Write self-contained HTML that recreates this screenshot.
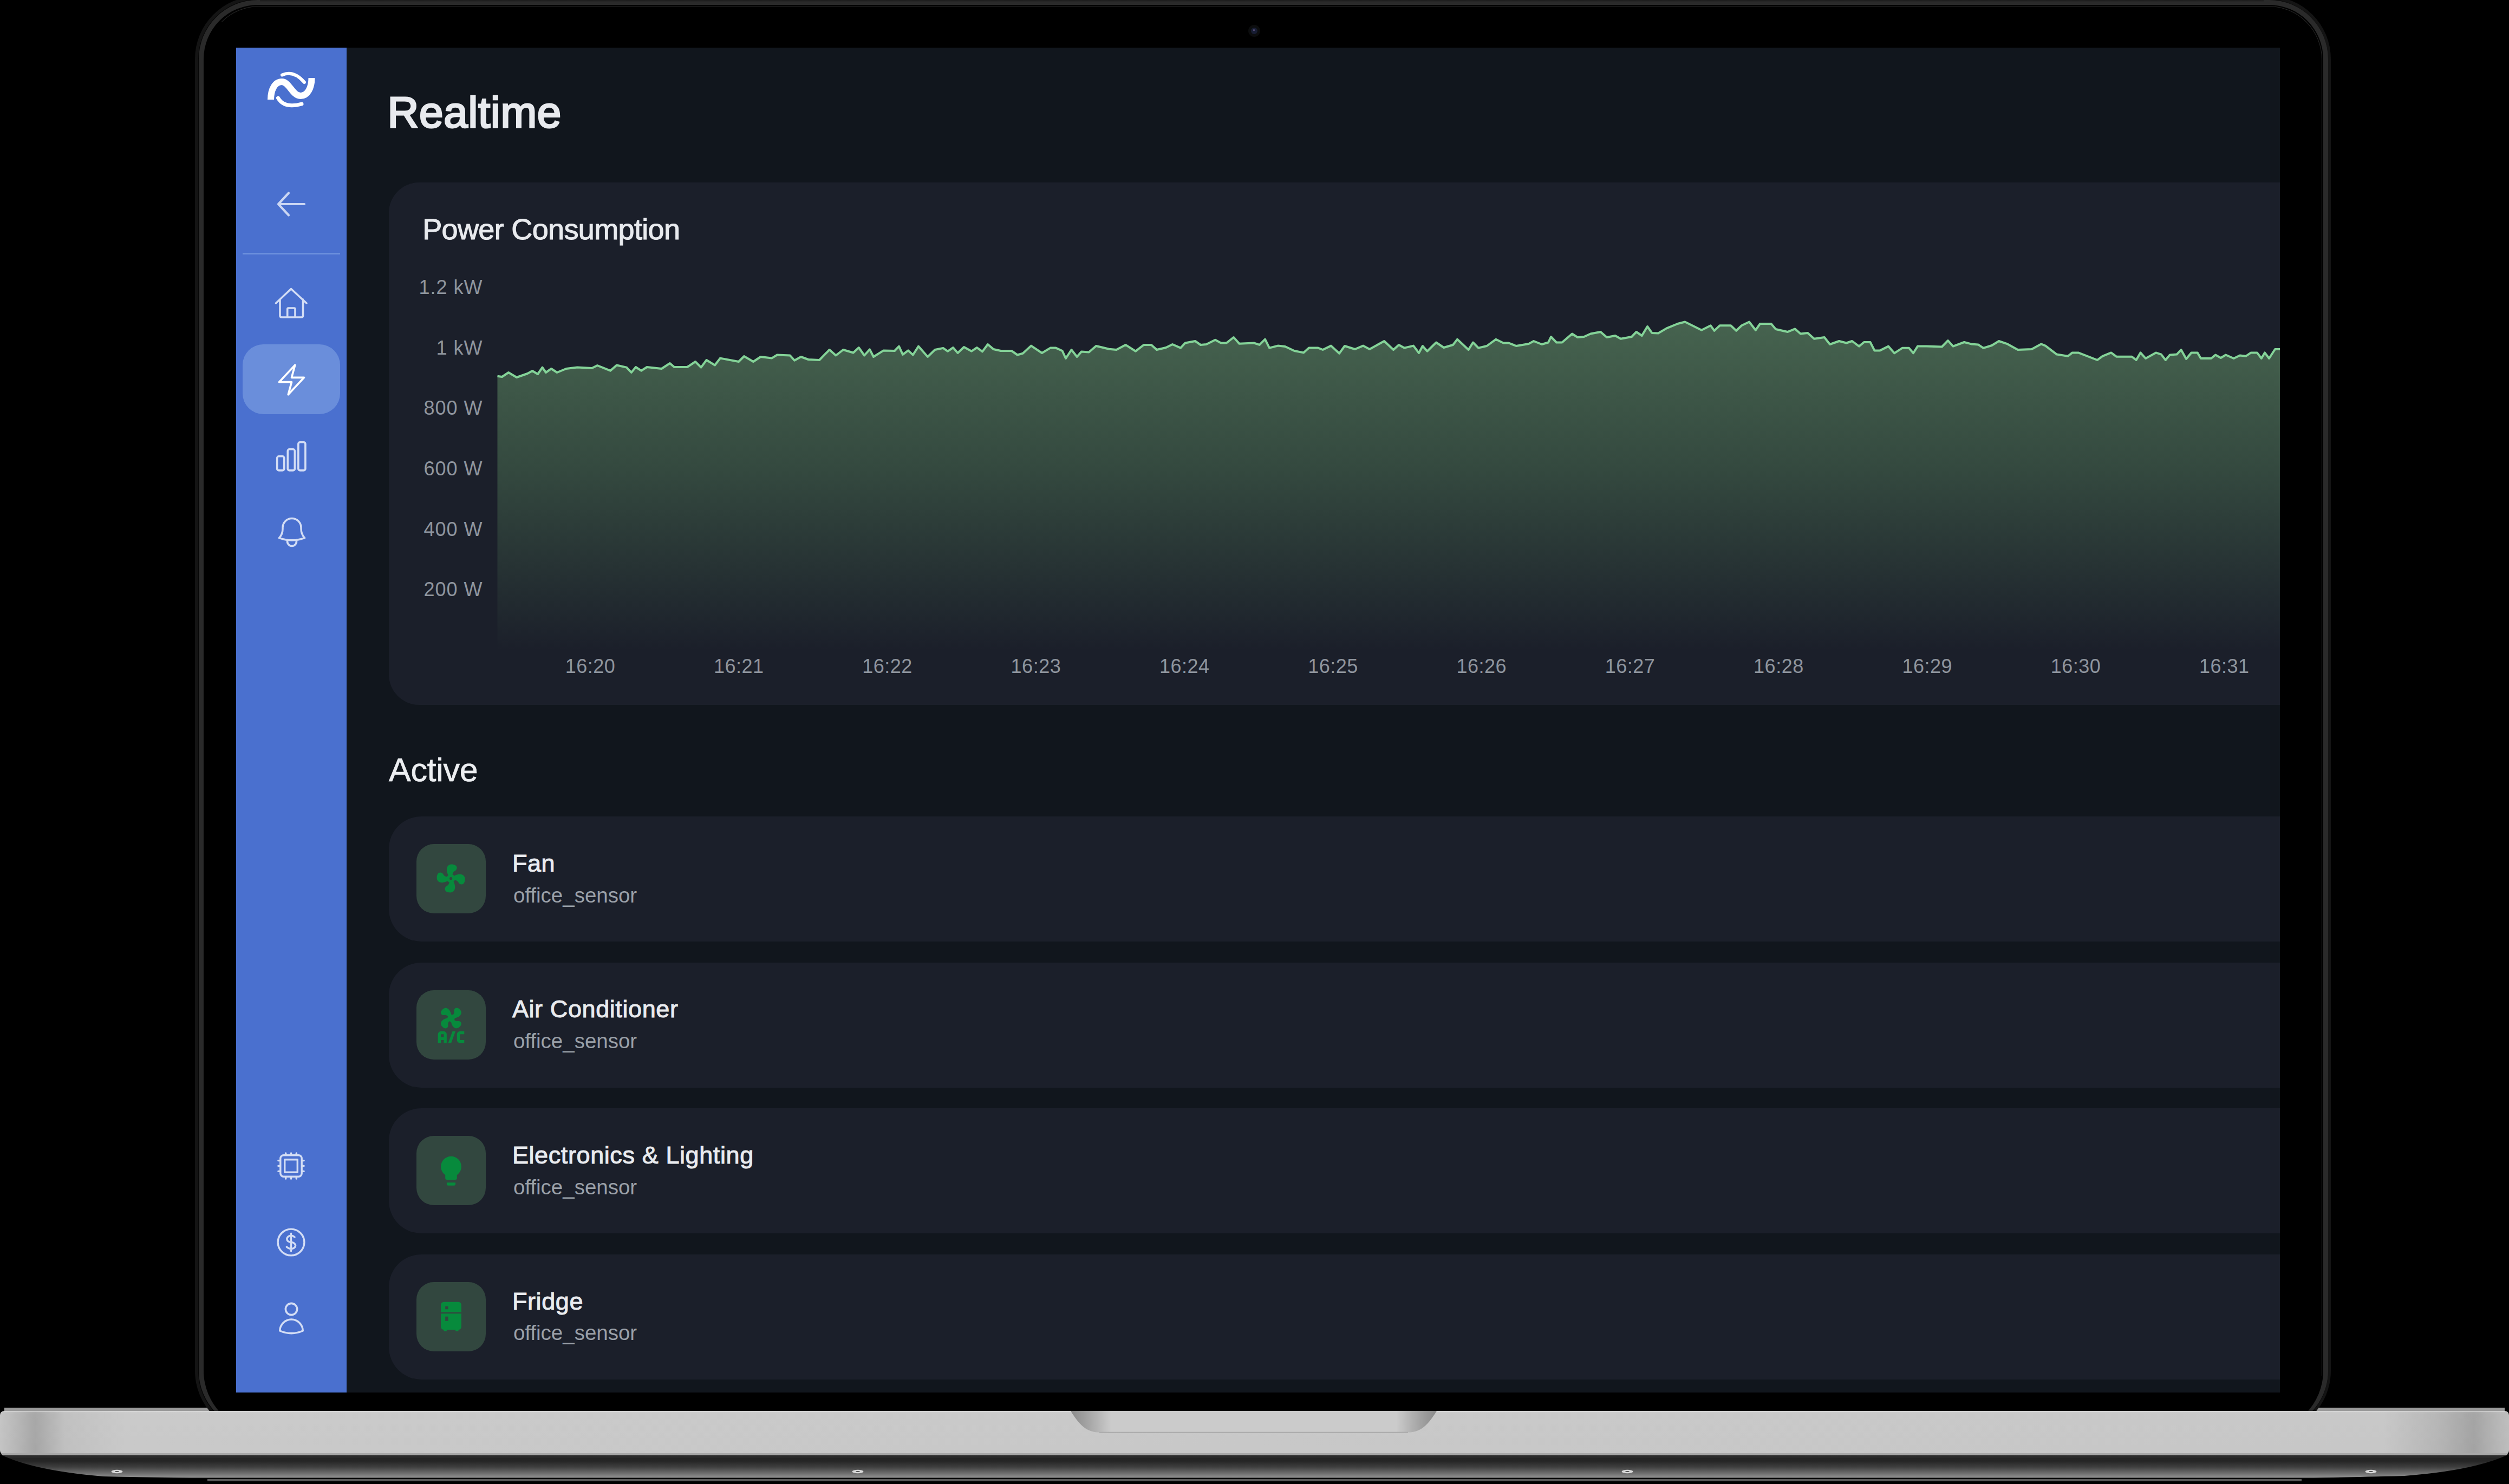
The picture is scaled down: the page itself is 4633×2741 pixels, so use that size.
<!DOCTYPE html>
<html><head><meta charset="utf-8">
<style>
html,body{margin:0;padding:0;background:#000;width:4633px;height:2741px;overflow:hidden;position:relative}
*{box-sizing:border-box}
.abs{position:absolute;display:block}
.t{position:absolute;white-space:nowrap;font-family:"Liberation Sans",sans-serif}
.card{position:absolute;background:#1b1f2a}
.ibox{position:absolute;width:128px;height:128px;border-radius:32px;background:#32473f}
#screen{position:absolute;left:436px;top:88px;width:3774px;height:2484px;background:#11161d;overflow:hidden}
#sidebar{position:absolute;left:0;top:0;width:204px;height:2484px;background:#4a70cf}
</style></head><body>
<!-- base top strip -->
<div class="abs" style="left:8px;top:2600px;width:4617px;height:7px;background:#9a9a9a"></div>
<!-- lid -->
<div class="abs" style="left:360px;top:-7px;width:3944px;height:2655px;background:#141414;border-radius:116px 116px 116px 116px"></div>
<div class="abs" style="left:366px;top:-1px;width:3933px;height:2644px;background:#060606;border-radius:110px 110px 110px 110px"></div>
<div class="abs" style="left:367px;top:0px;width:3932px;height:2642px;background:#2a2a2a;border-radius:109px 109px 110px 110px"></div>
<div class="abs" style="left:376px;top:9px;width:3914px;height:2635px;background:#000;border-radius:100px 100px 112px 112px"></div>
<div class="abs" style="left:380px;top:10.5px;width:3908px;height:2530px;border:1.5px solid #272727;border-left-color:transparent;border-bottom:0;border-radius:99px 99px 0 0"></div>
<div class="abs" style="left:480px;top:0px;width:3700px;height:3px;background:linear-gradient(#1c1c1c,#262626)"></div>
<!-- camera -->
<div class="abs" style="left:2305px;top:45.5px;width:22px;height:22px;border-radius:50%;background:#0c0d0e"></div>
<div class="abs" style="left:2310px;top:50.5px;width:12px;height:12px;border-radius:50%;background:#171d33"></div>
<div class="abs" style="left:2314px;top:53.5px;width:3px;height:3px;border-radius:50%;background:#6a5a8a"></div>
<div id="screen">
<div id="sidebar">
<svg class="abs" style="left:41.5px;top:27px" width="120" height="100" viewBox="0 0 120 100">
<path d="M22,69 C22,50 30,36 42.5,36 C56,36 62,62 77,62 C90,62 97.5,47 97.5,29" fill="none" stroke="#fff" stroke-width="12"/>
<path d="M43,23.5 Q64,14 84,37" fill="none" stroke="#fff" stroke-width="6" stroke-linecap="round"/>
<path d="M35.5,66 Q47,86 79,77" fill="none" stroke="#fff" stroke-width="7" stroke-linecap="round"/>
</svg>
<svg class="abs" style="left:64px;top:255px" width="76" height="70" viewBox="0 0 76 70">
<path d="M14,34 H62 M14,34 L33,13.5 M14,34 L33,54.5" fill="none" stroke="#cbd6f3" stroke-width="4.2" stroke-linecap="round" stroke-linejoin="round"/>
</svg>
<div class="abs" style="left:12px;top:379px;width:180px;height:3px;background:#6b8fdd"></div>
<svg class="abs" style="left:64px;top:437px" width="76" height="70" viewBox="0 0 76 70">
<path d="M9.5,35 L37.5,8.5 L66,35 M17,28 V58 Q17,61 20,61 H56.5 Q59.5,61 59.5,58 V28 M30.7,61 V46 Q30.7,44 32.7,44 H43 Q45,44 45,46 V61" fill="none" stroke="#d3ddf5" stroke-width="3.6" stroke-linecap="round" stroke-linejoin="round"/>
</svg>
<div class="abs" style="left:12px;top:548px;width:180px;height:129px;border-radius:38px;background:#6a8edb"></div>
<svg class="abs" style="left:68.5px;top:579.5px" width="67" height="67" viewBox="0 0 24 24">
<path d="M3.75 13.5l10.5-11.25L12 10.5h8.25L9.75 21.75 12 13.5H3.75z" fill="none" stroke="#fff" stroke-width="1.3" stroke-linejoin="round" stroke-linecap="round"/>
</svg>
<svg class="abs" style="left:67.2px;top:719.7px" width="69.6" height="69.6" viewBox="0 0 24 24">
<path d="M3 13.125C3 12.504 3.504 12 4.125 12h2.25c.621 0 1.125.504 1.125 1.125v6.75C7.5 20.496 6.996 21 6.375 21h-2.25A1.125 1.125 0 013 19.875v-6.75zM9.75 8.625c0-.621.504-1.125 1.125-1.125h2.25c.621 0 1.125.504 1.125 1.125v11.25c0 .621-.504 1.125-1.125 1.125h-2.25a1.125 1.125 0 01-1.125-1.125V8.625zM16.5 4.125c0-.621.504-1.125 1.125-1.125h2.25C20.496 3 21 3.504 21 4.125v15.75c0 .621-.504 1.125-1.125 1.125h-2.25a1.125 1.125 0 01-1.125-1.125V4.125z" fill="none" stroke="#d3ddf5" stroke-width="1.25"/>
</svg>
<svg class="abs" style="left:68.6px;top:861px" width="68" height="68" viewBox="0 0 24 24">
<path d="M14.857 17.082a23.848 23.848 0 005.454-1.31A8.967 8.967 0 0118 9.75v-.7V9A6 6 0 006 9v.75a8.967 8.967 0 01-2.312 6.022c1.733.64 3.56 1.085 5.455 1.31m5.714 0a24.255 24.255 0 01-5.714 0m5.714 0a3 3 0 11-5.714 0" fill="none" stroke="#d3ddf5" stroke-width="1.25" stroke-linecap="round" stroke-linejoin="round"/>
</svg>
<svg class="abs" style="left:70px;top:2034px" width="63" height="63" viewBox="0 0 24 24">
<path d="M8.25 3v1.5M4.5 8.25H3m18 0h-1.5M4.5 12H3m18 0h-1.5m-15 3.75H3m18 0h-1.5M8.25 19.5V21M12 3v1.5m0 15V21m3.75-18v1.5m0 15V21m-9-1.5h10.5a2.25 2.25 0 002.25-2.25V6.75a2.25 2.25 0 00-2.25-2.25H6.75A2.25 2.25 0 004.5 6.75v10.5a2.25 2.25 0 002.25 2.25zm.75-12h9v9h-9v-9z" fill="none" stroke="#d3ddf5" stroke-width="1.3" stroke-linecap="round" stroke-linejoin="round"/>
</svg>
<svg class="abs" style="left:69px;top:2174px" width="65" height="65" viewBox="0 0 24 24">
<path d="M12 6v12m-3-2.818l.879.659c1.171.879 3.07.879 4.242 0 1.172-.879 1.172-2.303 0-3.182C13.536 12.219 12.768 12 12 12c-.725 0-1.45-.22-2.003-.659-1.106-.879-1.106-2.303 0-3.182s2.9-.879 4.006 0l.415.33M21 12a9 9 0 11-18 0 9 9 0 0118 0z" fill="none" stroke="#d3ddf5" stroke-width="1.25" stroke-linecap="round" stroke-linejoin="round"/>
</svg>
<svg class="abs" style="left:67.5px;top:2313px" width="68" height="68" viewBox="0 0 24 24">
<path d="M15.75 6a3.75 3.75 0 11-7.5 0 3.75 3.75 0 017.5 0zM4.501 20.118a7.5 7.5 0 0114.998 0A17.933 17.933 0 0112 21.75c-2.676 0-5.216-.584-7.499-1.632z" fill="none" stroke="#d3ddf5" stroke-width="1.25" stroke-linecap="round" stroke-linejoin="round"/>
</svg>
</div>
<div class="t" style="left:279.4px;top:79.5px;font-size:80px;line-height:80px;font-weight:400;color:#e8eaee;letter-spacing:0.75px;-webkit-text-stroke:3px #e8eaee;">Realtime</div>
<div class="card" style="left:282px;top:249px;width:3582px;height:965px;border-radius:56px"></div>
<div class="t" style="left:344.2px;top:307.9px;font-size:54px;line-height:54px;font-weight:400;color:#e8eaee;letter-spacing:-0.65px;-webkit-text-stroke:1.1px #e8eaee;">Power Consumption</div>
<div class="t" style="right:3318.5px;top:425.2px;font-size:36px;line-height:36px;font-weight:400;color:#8f959e;letter-spacing:1.0px">1.2 kW</div>
<div class="t" style="right:3318.5px;top:536.8px;font-size:36px;line-height:36px;font-weight:400;color:#8f959e;letter-spacing:1.0px">1 kW</div>
<div class="t" style="right:3318.5px;top:648.4px;font-size:36px;line-height:36px;font-weight:400;color:#8f959e;letter-spacing:1.0px">800 W</div>
<div class="t" style="right:3318.5px;top:760.0px;font-size:36px;line-height:36px;font-weight:400;color:#8f959e;letter-spacing:1.0px">600 W</div>
<div class="t" style="right:3318.5px;top:871.6px;font-size:36px;line-height:36px;font-weight:400;color:#8f959e;letter-spacing:1.0px">400 W</div>
<div class="t" style="right:3318.5px;top:983.2px;font-size:36px;line-height:36px;font-weight:400;color:#8f959e;letter-spacing:1.0px">200 W</div>
<div class="t" style="left:454.0px;width:400px;text-align:center;top:1125.0px;font-size:36px;line-height:36px;font-weight:400;color:#8f959e;letter-spacing:0.5px">16:20</div>
<div class="t" style="left:728.3px;width:400px;text-align:center;top:1125.0px;font-size:36px;line-height:36px;font-weight:400;color:#8f959e;letter-spacing:0.5px">16:21</div>
<div class="t" style="left:1002.6px;width:400px;text-align:center;top:1125.0px;font-size:36px;line-height:36px;font-weight:400;color:#8f959e;letter-spacing:0.5px">16:22</div>
<div class="t" style="left:1276.9px;width:400px;text-align:center;top:1125.0px;font-size:36px;line-height:36px;font-weight:400;color:#8f959e;letter-spacing:0.5px">16:23</div>
<div class="t" style="left:1551.2px;width:400px;text-align:center;top:1125.0px;font-size:36px;line-height:36px;font-weight:400;color:#8f959e;letter-spacing:0.5px">16:24</div>
<div class="t" style="left:1825.5px;width:400px;text-align:center;top:1125.0px;font-size:36px;line-height:36px;font-weight:400;color:#8f959e;letter-spacing:0.5px">16:25</div>
<div class="t" style="left:2099.8px;width:400px;text-align:center;top:1125.0px;font-size:36px;line-height:36px;font-weight:400;color:#8f959e;letter-spacing:0.5px">16:26</div>
<div class="t" style="left:2374.1px;width:400px;text-align:center;top:1125.0px;font-size:36px;line-height:36px;font-weight:400;color:#8f959e;letter-spacing:0.5px">16:27</div>
<div class="t" style="left:2648.4px;width:400px;text-align:center;top:1125.0px;font-size:36px;line-height:36px;font-weight:400;color:#8f959e;letter-spacing:0.5px">16:28</div>
<div class="t" style="left:2922.7px;width:400px;text-align:center;top:1125.0px;font-size:36px;line-height:36px;font-weight:400;color:#8f959e;letter-spacing:0.5px">16:29</div>
<div class="t" style="left:3197.0px;width:400px;text-align:center;top:1125.0px;font-size:36px;line-height:36px;font-weight:400;color:#8f959e;letter-spacing:0.5px">16:30</div>
<div class="t" style="left:3471.3px;width:400px;text-align:center;top:1125.0px;font-size:36px;line-height:36px;font-weight:400;color:#8f959e;letter-spacing:0.5px">16:31</div>
<svg class="abs" style="left:469px;top:472px" width="3305" height="650" viewBox="0 0 3305 650"><defs><linearGradient id="ag" x1="0" y1="0" x2="0" y2="1"><stop offset="0" stop-color="#46634f"/><stop offset="0.45" stop-color="#34493f"/><stop offset="1" stop-color="#1b1f2a" stop-opacity="1"/></linearGradient></defs><path d="M13.5,134.8 L22,136 L34,128 L49,137 L69,130 L78,125 L88,131 L96.5,118.6 L103,128 L113,121 L123.6,128 L140.5,121 L161,118.6 L188,120 L198,115 L222,124.7 L233.7,114.5 L252,118.6 L260.8,128 L269,118 L279,124.7 L289.6,118 L316.6,121 L332,111 L340,118 L364,118 L379,108 L389.5,118.6 L399.6,105 L415,114.5 L425,101.6 L459,108 L469,98 L486,108 L499.6,99 L520,101.6 L530,95.5 L553.8,96.5 L562,105.7 L574,99 L587.6,104 L608,105 L626.6,86 L638.5,96.5 L652,86 L670.6,91.5 L680.8,82 L691,96.5 L701,85.4 L708,99 L726.5,87.4 L747,88 L755,79.6 L762,94.8 L772,87.4 L780.8,95.5 L791,79.6 L808,99 L821.4,86 L836.6,82.9 L845,88.8 L855,82 L863.5,92 L875,81 L889,88.7 L899,82 L909,89.4 L919,76 L929.5,85 L943,88 L963,88 L973.6,95.5 L983.7,92.8 L999,78.6 L1019,92 L1034.5,82.6 L1044.7,82.6 L1056.6,88 L1063,102 L1073.5,86 L1083.7,99 L1092,89.4 L1105.7,90.4 L1119,79 L1143,84.7 L1156.5,86 L1173.4,76.9 L1192,88.7 L1207,77 L1221,77 L1231,86 L1248,82 L1260,76 L1275,82.6 L1283.5,73.5 L1302,70 L1312,77 L1322.5,76 L1339,67.7 L1349.6,73.5 L1359.7,73.5 L1373,63 L1383.5,74.8 L1410.5,73.5 L1420.7,76.9 L1431,66.7 L1439,82.6 L1454.6,78.6 L1468,80 L1485,88 L1502,91.4 L1512,82.6 L1529,82.6 L1537.6,86 L1552.8,78.6 L1568,92.8 L1578,79 L1597,85 L1612,78.6 L1624,85 L1651,70 L1668,86 L1678,77 L1688,82.6 L1705,78.6 L1715,92 L1722,79 L1730.4,88.7 L1747,72.5 L1761,82 L1778,77 L1786,66.7 L1806.6,86 L1815,72.5 L1825,82.6 L1840.5,79 L1857.4,66.7 L1871,73.5 L1881,73.5 L1894.7,79 L1918,75 L1927,70 L1942,76 L1954,72.5 L1959,62 L1969,72.5 L1979.4,72.5 L1998,56.5 L2008,63 L2020,62 L2032,56.5 L2050.5,53 L2062,63 L2077.6,60 L2087.8,65.7 L2108,62 L2116.6,53 L2126.8,60 L2137,43 L2145.4,54.9 L2157,55.5 L2172.5,46.4 L2192.8,38 L2206.4,34.5 L2220,41.3 L2237,49.8 L2253.8,41.3 L2260.6,50.8 L2270.7,41.3 L2291,41.3 L2301,50.8 L2311,41.3 L2325,34.5 L2336.8,49.8 L2345,38 L2365.6,38 L2374,48 L2396,53 L2409.6,47.4 L2419.8,56.5 L2433,55 L2445,65.7 L2463.8,63 L2474,76 L2491,70 L2504.5,73.5 L2515,70 L2527.8,79.6 L2537,72 L2548.5,72 L2556.5,87.6 L2566,87.6 L2582,79.6 L2593,92.3 L2607.5,82.8 L2620,82.8 L2628,92.3 L2636,79.6 L2652,79.6 L2680.8,80.5 L2692,69 L2701.5,79.6 L2722,72 L2735,75.4 L2747.8,76.4 L2757.4,82.8 L2773,78 L2786,70 L2802,75.4 L2821,86 L2846.6,85 L2864,75.4 L2872,78.6 L2892.9,94.6 L2913.6,97.8 L2921.6,91.4 L2932.7,91.4 L2967.8,105 L2977.4,97.8 L2993.3,91.4 L3003,98.7 L3031.6,98.7 L3039.6,105 L3047.5,91.4 L3057,102 L3076,91.4 L3085.8,94.6 L3093.8,105 L3101.7,95.5 L3114.5,94.6 L3122.5,86 L3132,102.9 L3141.6,91.4 L3152.8,91.4 L3159,102 L3178,102 L3186,95.5 L3195.8,101 L3205,95.5 L3219.7,102 L3231,96.5 L3242,97.8 L3251.6,91.4 L3262.8,91.4 L3270.8,102 L3277,91.4 L3285,102 L3296,85 L3310,85 L3310,642 L13.5,642 Z" fill="url(#ag)"/><path d="M13.5,134.8 L22,136 L34,128 L49,137 L69,130 L78,125 L88,131 L96.5,118.6 L103,128 L113,121 L123.6,128 L140.5,121 L161,118.6 L188,120 L198,115 L222,124.7 L233.7,114.5 L252,118.6 L260.8,128 L269,118 L279,124.7 L289.6,118 L316.6,121 L332,111 L340,118 L364,118 L379,108 L389.5,118.6 L399.6,105 L415,114.5 L425,101.6 L459,108 L469,98 L486,108 L499.6,99 L520,101.6 L530,95.5 L553.8,96.5 L562,105.7 L574,99 L587.6,104 L608,105 L626.6,86 L638.5,96.5 L652,86 L670.6,91.5 L680.8,82 L691,96.5 L701,85.4 L708,99 L726.5,87.4 L747,88 L755,79.6 L762,94.8 L772,87.4 L780.8,95.5 L791,79.6 L808,99 L821.4,86 L836.6,82.9 L845,88.8 L855,82 L863.5,92 L875,81 L889,88.7 L899,82 L909,89.4 L919,76 L929.5,85 L943,88 L963,88 L973.6,95.5 L983.7,92.8 L999,78.6 L1019,92 L1034.5,82.6 L1044.7,82.6 L1056.6,88 L1063,102 L1073.5,86 L1083.7,99 L1092,89.4 L1105.7,90.4 L1119,79 L1143,84.7 L1156.5,86 L1173.4,76.9 L1192,88.7 L1207,77 L1221,77 L1231,86 L1248,82 L1260,76 L1275,82.6 L1283.5,73.5 L1302,70 L1312,77 L1322.5,76 L1339,67.7 L1349.6,73.5 L1359.7,73.5 L1373,63 L1383.5,74.8 L1410.5,73.5 L1420.7,76.9 L1431,66.7 L1439,82.6 L1454.6,78.6 L1468,80 L1485,88 L1502,91.4 L1512,82.6 L1529,82.6 L1537.6,86 L1552.8,78.6 L1568,92.8 L1578,79 L1597,85 L1612,78.6 L1624,85 L1651,70 L1668,86 L1678,77 L1688,82.6 L1705,78.6 L1715,92 L1722,79 L1730.4,88.7 L1747,72.5 L1761,82 L1778,77 L1786,66.7 L1806.6,86 L1815,72.5 L1825,82.6 L1840.5,79 L1857.4,66.7 L1871,73.5 L1881,73.5 L1894.7,79 L1918,75 L1927,70 L1942,76 L1954,72.5 L1959,62 L1969,72.5 L1979.4,72.5 L1998,56.5 L2008,63 L2020,62 L2032,56.5 L2050.5,53 L2062,63 L2077.6,60 L2087.8,65.7 L2108,62 L2116.6,53 L2126.8,60 L2137,43 L2145.4,54.9 L2157,55.5 L2172.5,46.4 L2192.8,38 L2206.4,34.5 L2220,41.3 L2237,49.8 L2253.8,41.3 L2260.6,50.8 L2270.7,41.3 L2291,41.3 L2301,50.8 L2311,41.3 L2325,34.5 L2336.8,49.8 L2345,38 L2365.6,38 L2374,48 L2396,53 L2409.6,47.4 L2419.8,56.5 L2433,55 L2445,65.7 L2463.8,63 L2474,76 L2491,70 L2504.5,73.5 L2515,70 L2527.8,79.6 L2537,72 L2548.5,72 L2556.5,87.6 L2566,87.6 L2582,79.6 L2593,92.3 L2607.5,82.8 L2620,82.8 L2628,92.3 L2636,79.6 L2652,79.6 L2680.8,80.5 L2692,69 L2701.5,79.6 L2722,72 L2735,75.4 L2747.8,76.4 L2757.4,82.8 L2773,78 L2786,70 L2802,75.4 L2821,86 L2846.6,85 L2864,75.4 L2872,78.6 L2892.9,94.6 L2913.6,97.8 L2921.6,91.4 L2932.7,91.4 L2967.8,105 L2977.4,97.8 L2993.3,91.4 L3003,98.7 L3031.6,98.7 L3039.6,105 L3047.5,91.4 L3057,102 L3076,91.4 L3085.8,94.6 L3093.8,105 L3101.7,95.5 L3114.5,94.6 L3122.5,86 L3132,102.9 L3141.6,91.4 L3152.8,91.4 L3159,102 L3178,102 L3186,95.5 L3195.8,101 L3205,95.5 L3219.7,102 L3231,96.5 L3242,97.8 L3251.6,91.4 L3262.8,91.4 L3270.8,102 L3277,91.4 L3285,102 L3296,85 L3310,85" fill="none" stroke="#84d398" stroke-width="4" stroke-linejoin="round"/></svg>
<div class="t" style="left:282.0px;top:1304.2px;font-size:61px;line-height:61px;font-weight:400;color:#eceef1;letter-spacing:-0.3px;-webkit-text-stroke:0.7px #eceef1;">Active</div>
<div class="card" style="left:282px;top:1420.0px;width:3582px;height:231px;border-radius:60px"></div>
<div class="ibox" style="left:333px;top:1471.0px"></div>
<svg class="abs" style="left:333px;top:1471.0px" width="128" height="128" viewBox="0 0 128 128"><g transform="translate(32.4,32.3) scale(2.6)"><path fill="#078a3c" d="M12,11A1,1 0 0,0 11,12A1,1 0 0,0 12,13A1,1 0 0,0 13,12A1,1 0 0,0 12,11M12.5,2C17,2 17.11,5.57 14.75,6.75C13.76,7.24 13.32,8.29 13.13,9.22C13.61,9.42 14.03,9.73 14.35,10.13C18.050,8.13 22.03,8.92 22.03,12.5C22.03,17 18.46,17.1 17.28,14.73C16.78,13.74 15.72,13.3 14.79,13.11C14.59,13.59 14.28,14 13.88,14.34C15.87,18.03 15.08,22 11.5,22C7,22 6.91,18.42 9.27,17.24C10.25,16.75 10.69,15.71 10.89,14.79C10.4,14.59 9.97,14.27 9.65,13.87C5.96,15.85 2,15.070 2,11.5C2,7 5.56,6.89 6.74,9.26C7.24,10.25 8.29,10.68 9.22,10.87C9.41,10.39 9.73,9.97 10.14,9.65C8.150,5.96 8.94,2 12.5,2Z"/></g></svg>
<div class="t" style="left:509.9px;top:1483.8px;font-size:45px;line-height:45px;font-weight:400;color:#e9ebef;letter-spacing:0.6px;-webkit-text-stroke:1px #e9ebef;">Fan</div>
<div class="t" style="left:511.9px;top:1546.6px;font-size:38.5px;line-height:38.5px;font-weight:400;color:#9aa0a8;letter-spacing:0px;">office_sensor</div>
<div class="card" style="left:282px;top:1689.6px;width:3582px;height:231px;border-radius:60px"></div>
<div class="ibox" style="left:333px;top:1740.6px"></div>
<svg class="abs" style="left:333px;top:1740.6px" width="128" height="128" viewBox="0 0 128 128"><g transform="translate(31.6,32.6) scale(2.7)"><path fill="#078a3c" d="M6.59,0.66C8.93,-1.15 11.47,1.06 12.04,4.5C12.47,4.5 12.89,4.62 13.27,4.84C13.79,4.24 14.25,3.42 14.07,2.5C13.65,0.35 16.06,-1.39 18.35,1.58C20.16,3.92 17.95,6.46 14.5,7.03C14.5,7.46 14.39,7.89 14.16,8.27C14.76,8.78 15.58,9.24 16.5,9.06C18.63,8.64 20.38,11.04 17.41,13.34C15.07,15.15 12.53,12.94 11.96,9.5C11.53,9.5 11.11,9.37 10.74,9.15C10.22,9.75 9.75,10.58 9.93,11.5C10.35,13.64 7.94,15.39 5.65,12.42C3.83,10.07 6.05,7.53 9.5,6.97C9.5,6.54 9.63,6.12 9.85,5.74C9.25,5.23 8.43,4.76 7.5,4.94C5.37,5.36 3.62,2.96 6.59,0.66M5,16H7A2,2 0 0,1 9,18V24H7V22H5V24H3V18A2,2 0 0,1 5,16M5,18V20H7V18H5M12.93,16H15L12.07,24H10L12.93,16M18,16H21V18H18V22H21V24H18A2,2 0 0,1 16,22V18A2,2 0 0,1 18,16Z"/></g></svg>
<div class="t" style="left:509.9px;top:1753.3px;font-size:45px;line-height:45px;font-weight:400;color:#e9ebef;letter-spacing:0.6px;-webkit-text-stroke:1px #e9ebef;">Air Conditioner</div>
<div class="t" style="left:511.9px;top:1816.2px;font-size:38.5px;line-height:38.5px;font-weight:400;color:#9aa0a8;letter-spacing:0px;">office_sensor</div>
<div class="card" style="left:282px;top:1959.2px;width:3582px;height:231px;border-radius:60px"></div>
<div class="ibox" style="left:333px;top:2010.2px"></div>
<svg class="abs" style="left:333px;top:2010.2px" width="128" height="128" viewBox="0 0 128 128"><g transform="translate(31.6,32.35) scale(2.7)"><path fill="#078a3c" d="M12,2A7,7 0 0,0 5,9C5,11.38 6.19,13.47 8,14.74V17A1,1 0 0,0 9,18H15A1,1 0 0,0 16,17V14.74C17.81,13.47 19,11.38 19,9A7,7 0 0,0 12,2M9,21A1,1 0 0,0 10,22H14A1,1 0 0,0 15,21V20H9V21Z"/></g></svg>
<div class="t" style="left:509.9px;top:2023.0px;font-size:45px;line-height:45px;font-weight:400;color:#e9ebef;letter-spacing:0.6px;-webkit-text-stroke:1px #e9ebef;">Electronics &amp; Lighting</div>
<div class="t" style="left:511.9px;top:2085.8px;font-size:38.5px;line-height:38.5px;font-weight:400;color:#9aa0a8;letter-spacing:0px;">office_sensor</div>
<div class="card" style="left:282px;top:2228.8px;width:3582px;height:231px;border-radius:60px"></div>
<div class="ibox" style="left:333px;top:2279.8px"></div>
<svg class="abs" style="left:333px;top:2279.8px" width="128" height="128" viewBox="0 0 128 128"><g transform="translate(31.6,31.35) scale(2.7)"><path fill="#078a3c" d="M7,2H17A2,2 0 0,1 19,4V9H5V4A2,2 0 0,1 7,2M19,19A2,2 0 0,1 17,21V22H15V21H9V22H7V21A2,2 0 0,1 5,19V10H19V19M8,5V7H10V5H8M8,12V15H10V12H8Z"/></g></svg>
<div class="t" style="left:509.9px;top:2292.6px;font-size:45px;line-height:45px;font-weight:400;color:#e9ebef;letter-spacing:0.6px;-webkit-text-stroke:1px #e9ebef;">Fridge</div>
<div class="t" style="left:511.9px;top:2355.4px;font-size:38.5px;line-height:38.5px;font-weight:400;color:#9aa0a8;letter-spacing:0px;">office_sensor</div>
</div>
<!-- base -->
<svg class="abs" style="left:0;top:2600px" width="4633" height="141" viewBox="0 0 4633 141">
<defs>
<linearGradient id="silverH" x1="0" y1="0" x2="1" y2="0">
<stop offset="0" stop-color="#c4c4c4"/>
<stop offset="0.007" stop-color="#b6b6b6"/>
<stop offset="0.014" stop-color="#a6a6a6"/>
<stop offset="0.026" stop-color="#c0c0c0"/>
<stop offset="0.05" stop-color="#c9c9c9"/>
<stop offset="0.5" stop-color="#c8c8c8"/>
<stop offset="0.95" stop-color="#c7c7c7"/>
<stop offset="0.972" stop-color="#b5b5b5"/>
<stop offset="0.986" stop-color="#a3a3a3"/>
<stop offset="0.994" stop-color="#b3b3b3"/>
<stop offset="1" stop-color="#bdbdbd"/>
</linearGradient>
<linearGradient id="silverV" x1="0" y1="0" x2="0" y2="1">
<stop offset="0" stop-color="#fff" stop-opacity="0.08"/>
<stop offset="0.08" stop-color="#fff" stop-opacity="0.02"/>
<stop offset="1" stop-color="#fff" stop-opacity="0"/>
</linearGradient>
<linearGradient id="under" x1="0" y1="0" x2="0" y2="1">
<stop offset="0" stop-color="#2d2d2d"/>
<stop offset="0.14" stop-color="#2b2b2b"/>
<stop offset="0.17" stop-color="#242424"/>
<stop offset="0.3" stop-color="#262626"/>
<stop offset="0.55" stop-color="#404040"/>
<stop offset="0.8" stop-color="#6c6c6c"/>
<stop offset="1" stop-color="#939393"/>
</linearGradient>
<linearGradient id="notchL" x1="0" y1="0" x2="1" y2="0">
<stop offset="0" stop-color="#8a8a8a"/>
<stop offset="0.05" stop-color="#a6a6a6"/>
<stop offset="0.11" stop-color="#cbcbcb"/>
<stop offset="0.89" stop-color="#cbcbcb"/>
<stop offset="0.95" stop-color="#a6a6a6"/>
<stop offset="1" stop-color="#8a8a8a"/>
</linearGradient>
</defs>
<!-- underside -->
<path d="M0,86 H4633 Q4570,116 4440,126 Q4300,129.5 4250,129.5 H383 Q300,129.5 191,127 Q60,116 0,86 Z" fill="url(#under)"/>
<rect x="383" y="132" width="3867" height="4" fill="#5a5a5a"/>
<ellipse cx="216" cy="118" rx="10.5" ry="3.2" fill="#d8d8d8"/><ellipse cx="216" cy="118.2" rx="3.8" ry="0.9" fill="#3a3a3a"/>
<ellipse cx="1584" cy="118" rx="10.5" ry="3.2" fill="#d8d8d8"/><ellipse cx="1584" cy="118.2" rx="3.8" ry="0.9" fill="#3a3a3a"/>
<ellipse cx="3005" cy="118" rx="10.5" ry="3.2" fill="#d8d8d8"/><ellipse cx="3005" cy="118.2" rx="3.8" ry="0.9" fill="#3a3a3a"/>
<ellipse cx="4378" cy="118" rx="10.5" ry="3.2" fill="#d8d8d8"/><ellipse cx="4378" cy="118.2" rx="3.8" ry="0.9" fill="#3a3a3a"/>
<!-- silver face -->
<rect x="0" y="6" width="4633" height="81" rx="8" ry="8" fill="url(#silverH)"/>
<rect x="0" y="6" width="4633" height="81" rx="8" ry="8" fill="url(#silverV)"/>
<rect x="4" y="84" width="4625" height="4" fill="#a9a9a9"/>
<rect x="8" y="6" width="4617" height="1.2" fill="#dedede"/>
<!-- notch -->
<path d="M1977,6 L2653,6 C2638,30 2625,45.6 2600,45.6 L2030,45.6 C2005,45.6 1992,30 1977,6 Z" fill="url(#notchL)"/>
<path d="M2030,45.6 L2600,45.6" stroke="#a3a3a3" stroke-width="1.5"/>
</svg>
</body></html>
